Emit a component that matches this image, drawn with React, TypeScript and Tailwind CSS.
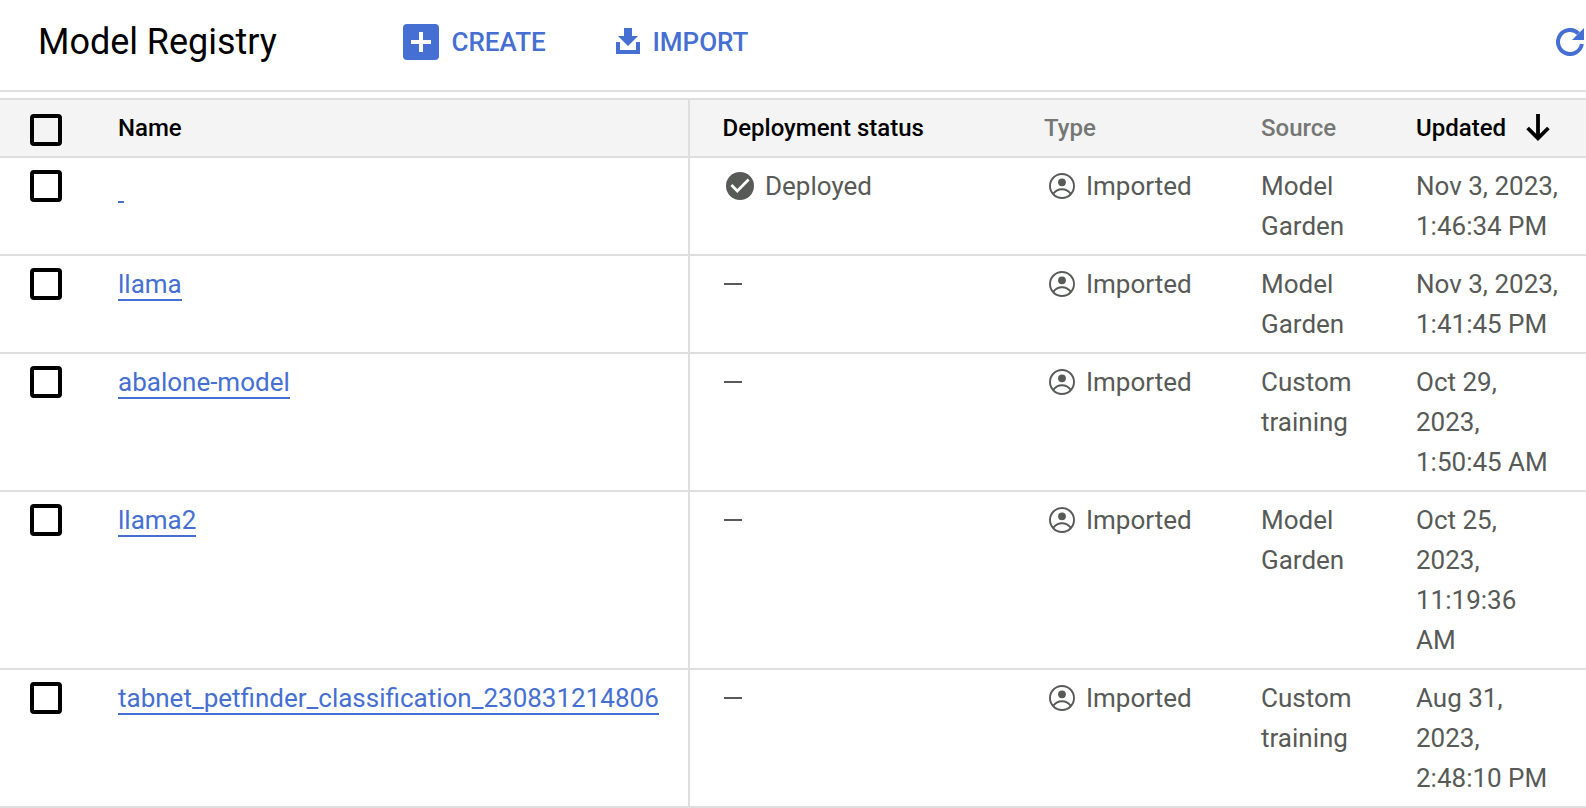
import React from "react";

type Model = {
  name: string;
  deployed: boolean;
  source: string;
  updated: string;
};

const models: Model[] = [
  { name: "", deployed: true, source: "Model Garden", updated: "Nov 3, 2023, 1:46:34 PM" },
  { name: "llama", deployed: false, source: "Model Garden", updated: "Nov 3, 2023, 1:41:45 PM" },
  { name: "abalone-model", deployed: false, source: "Custom training", updated: "Oct 29, 2023, 1:50:45 AM" },
  { name: "llama2", deployed: false, source: "Model Garden", updated: "Oct 25, 2023, 11:19:36 AM" },
  {
    name: "tabnet_petfinder_classification_230831214806",
    deployed: false,
    source: "Custom training",
    updated: "Aug 31, 2023, 2:48:10 PM",
  },
];

function Checkbox({ label }: { label: string }) {
  return (
    <span
      role="checkbox"
      aria-checked="false"
      aria-label={label}
      className="block h-8 w-8 rounded-[4px] border-4 border-black"
    />
  );
}

function CheckCircle() {
  return (
    <svg width="28" height="28" viewBox="0 0 28 28" className="shrink-0">
      <circle cx="14" cy="14" r="14" fill="#575a57" />
      <path d="M5.4 13l5.900 5.900L22.600 7.600" fill="none" stroke="#fff" strokeWidth="2.8" />
    </svg>
  );
}

function AccountIcon() {
  return (
    <svg width="26" height="26" viewBox="0 0 26 26" className="shrink-0">
      <circle cx="13" cy="13" r="12" fill="none" stroke="#575a57" strokeWidth="1.9" />
      <circle cx="13" cy="9.3" r="3.9" fill="#575a57" />
      <path d="M4.4 20.6C6.6 17.6 9.6 16.2 13 16.2s6.4 1.4 8.6 4.4" fill="none" stroke="#575a57" strokeWidth="1.9" />
    </svg>
  );
}

export default function App() {
  return (
    <div className="h-[808px] w-[1586px] overflow-hidden bg-white font-['Roboto',sans-serif] text-[26px] leading-10 text-[#575a57]">
      <header className="flex h-[92px] items-center border-b-2 border-[#dedede] pb-[6px]">
        <h1 className="w-[403px] pl-[38px] text-[36px] tracking-[-0.03px] text-black">Model Registry</h1>
        <button className="flex w-[213px] items-center gap-[12.5px] font-medium text-[#466fd3]">
          <svg width="36" height="36" viewBox="0 0 36 36">
            <rect width="36" height="36" rx="4" fill="#466fd3" />
            <path d="M8 18h20M18 8v20" stroke="#fff" strokeWidth="4" />
          </svg>
          CREATE
        </button>
        <button className="flex items-center gap-[12.5px] font-medium text-[#466fd3]">
          <svg width="24" height="26" viewBox="0 0 24 26" className="mt-[-2px]">
            <path d="M8 0h8v8h6L12 18 2 8h6z" fill="#466fd3" />
            <path d="M2 14v10h20V14" fill="none" stroke="#466fd3" strokeWidth="4" />
          </svg>
          IMPORT
        </button>
        <svg width="28" height="28" viewBox="0 0 28 28" className="mr-[2px] ml-auto">
          <path d="M25.850 16A12 12 0 1 1 22.500 5.500" fill="none" stroke="#466fd3" strokeWidth="4" />
          <path d="M28 0v12H16z" fill="#466fd3" />
        </svg>
      </header>

      <div className="mt-[6px] grid grid-cols-[118px_572px_354px_217px_155px_170px] border-y-2 border-[#dedede] bg-[#f4f4f4] text-2xl leading-10 font-medium text-black">
        <div className="h-14 pt-[14px] pl-[30px]">
          <Checkbox label="Select all" />
        </div>
        <div className="border-r-2 border-[#dedede] pt-2">Name</div>
        <div className="pt-2 pl-[32.5px]">Deployment status</div>
        <div className="pt-2 text-[#757775]">Type</div>
        <div className="pt-2 text-[#757775]">Source</div>
        <div className="flex gap-5 pt-2">
          Updated
          <svg width="24" height="28" viewBox="0 0 24 28" className="mt-[6px]">
            <path d="M12 0v24M1.600 14L12 24.400 22.400 14" fill="none" stroke="#000" strokeWidth="3.800" />
          </svg>
        </div>
      </div>

      {models.map((m) => (
        <div
          key={m.updated}
          className="grid grid-cols-[118px_572px_354px_217px_155px_170px] border-b-2 border-[#dedede]"
        >
          <div className="pt-3 pl-[30px]">
            <Checkbox label={m.name || "Select model"} />
          </div>
          <div className="border-r-2 border-[#dedede] pt-2">
            <a className="block h-[37px] w-fit min-w-[6px] border-b-2 border-[#466fd3] text-[#466fd3]">{m.name}</a>
          </div>
          <div className="py-2 pl-8">
            {m.deployed ? (
              <span className="flex items-center gap-[11px] pl-1">
                <CheckCircle />
                Deployed
              </span>
            ) : (
              <span className="mt-[19px] ml-[2px] block h-[2px] w-[18px] bg-[#575a57]" />
            )}
          </div>
          <div className="flex h-14 items-center gap-[11px] pl-[5px]">
            <AccountIcon />
            Imported
          </div>
          <div className="w-[120px] py-2">{m.source}</div>
          <div className="w-[144px] py-2">{m.updated}</div>
        </div>
      ))}
    </div>
  );
}
